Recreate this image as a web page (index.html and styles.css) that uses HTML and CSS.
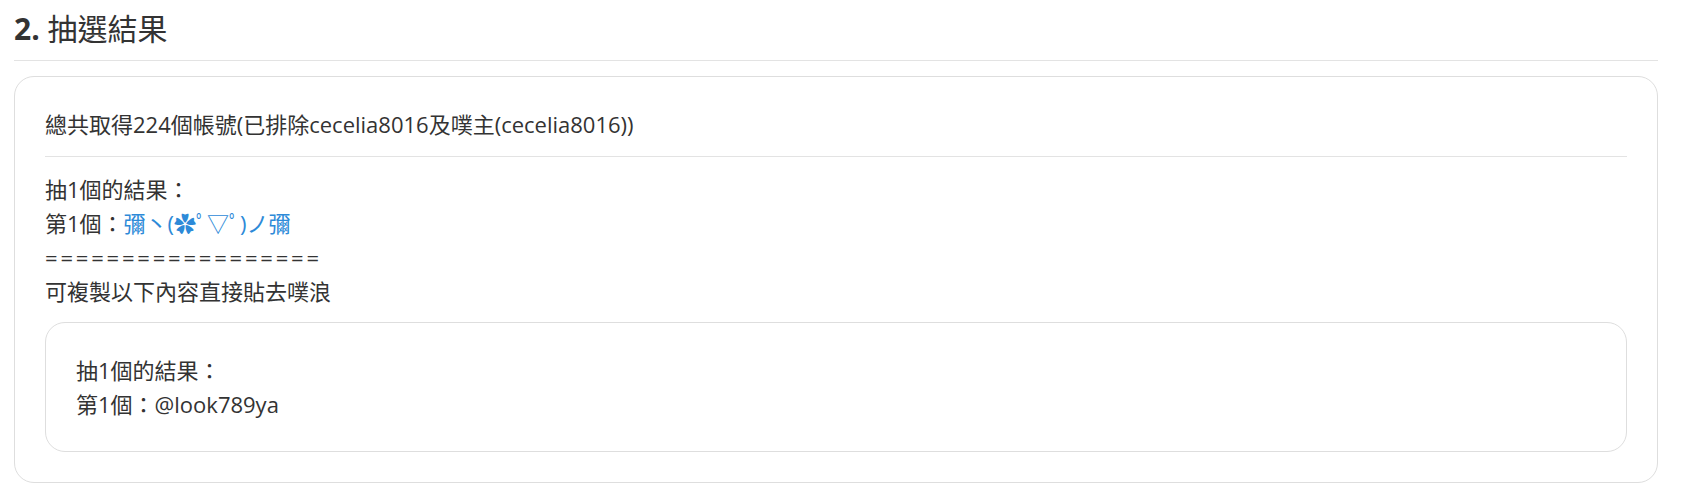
FILE: index.html
```html
<!DOCTYPE html>
<html lang="zh-Hant">
<head>
  <meta charset="UTF-8">
  <title>抽選結果</title>
  <link rel="stylesheet" href="styles.css">
</head>
<body>
  <div class="page">
    <h3 class="section-title"><span class="num">2.</span> 抽選結果</h3>

    <div class="result-card">
      <p class="summary">總共取得224個帳號(已排除cecelia8016及噗主(cecelia8016))</p>
      <hr class="divider">
      <div class="result-lines">
        <div>抽1個的結果：</div>
        <div>第1個：<a href="#" class="winner">彌丶(✿ﾟ▽ﾟ)ノ彌</a></div>
        <div class="sep">==================</div>
        <div>可複製以下內容直接貼去噗浪</div>
      </div>

      <div class="copy-box">
        <div>抽1個的結果：</div>
        <div>第1個：@look789ya</div>
      </div>
    </div>
  </div>
</body>
</html>
```

FILE: styles.css
```css
body {
  margin: 0;
  background-color: #ffffff;
  font-family: "Open Sans", "Noto Sans CJK TC", sans-serif;
  color: #333;
}

.page {
  padding: 11px 25px 16px 14px;
}

.section-title {
  margin: 0;
  padding-bottom: 13px;
  font-size: 30px;
  line-height: 36px;
  font-weight: 400;
  color: #333;
  border-bottom: 1px solid #e3e3e3;
}

.section-title .num {
  font-weight: 700;
}

.result-card {
  margin-top: 15px;
  padding: 30px;
  border: 1px solid #dedede;
  border-radius: 20px;
  font-size: 22px;
  line-height: 34px;
}

.summary {
  margin: 0;
}

.divider {
  margin: 15px 0 15px 0;
  border: 0;
  border-top: 1px solid #e3e3e3;
}

.winner {
  color: #2d8ad8;
  text-decoration: none;
}

.sep {
  letter-spacing: 2.8px;
}

.copy-box {
  margin-top: 14px;
  padding: 30px;
  border: 1px solid #dedede;
  border-radius: 20px;
}
```
